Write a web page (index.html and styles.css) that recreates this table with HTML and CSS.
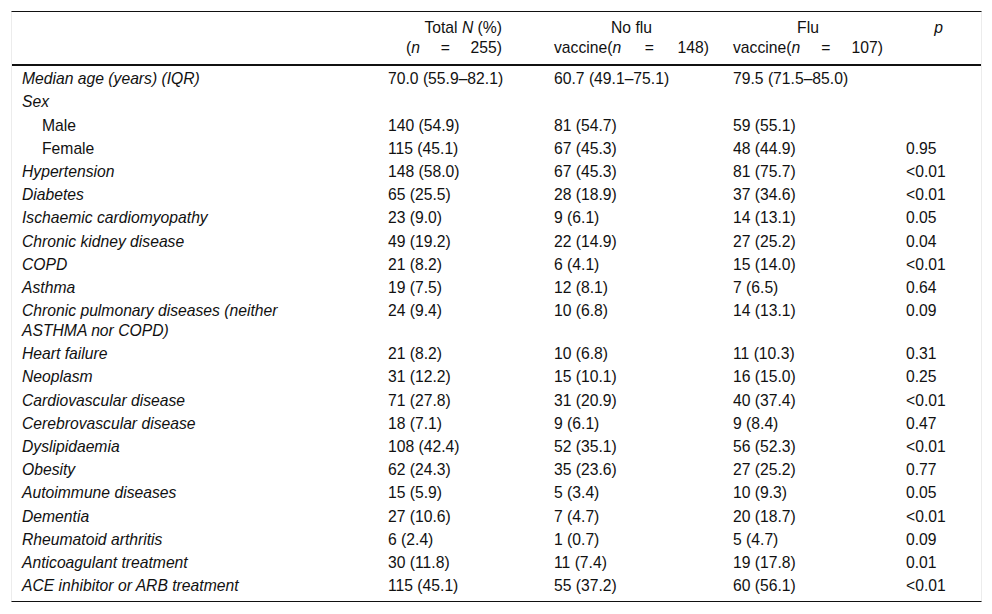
FILE: index.html
```html
<!DOCTYPE html>
<html lang="en">
<head>
<meta charset="utf-8">
<title>Table</title>
<link rel="stylesheet" href="styles.css">
</head>
<body>
<div class="wrap">
<table class="tbl">
<colgroup>
<col class="c1"><col class="c2"><col class="c3"><col class="c4"><col class="c5">
</colgroup>
<thead>
<tr>
<th></th>
<th><div class="hb hb-total"><div class="l1 right">Total <i>N</i> (%)</div><div class="l2"><span>(<i>n</i></span><span>=</span><span>255)</span></div></div></th>
<th><div class="hb hb-nf"><div class="l1">No flu</div><div class="l2"><span>vaccine(<i>n</i></span><span>=</span><span>148)</span></div></div></th>
<th><div class="hb hb-f"><div class="l1">Flu</div><div class="l2"><span>vaccine(<i>n</i></span><span>=</span><span>107)</span></div></div></th>
<th class="pcol"><i>p</i></th>
</tr>
</thead>
<tbody>
<tr><td class="lab">Median age (years) (IQR)</td><td>70.0 (55.9–82.1)</td><td>60.7 (49.1–75.1)</td><td>79.5 (71.5–85.0)</td><td></td></tr>
<tr><td class="lab">Sex</td><td></td><td></td><td></td><td></td></tr>
<tr><td class="sub">Male</td><td>140 (54.9)</td><td>81 (54.7)</td><td>59 (55.1)</td><td></td></tr>
<tr><td class="sub">Female</td><td>115 (45.1)</td><td>67 (45.3)</td><td>48 (44.9)</td><td>0.95</td></tr>
<tr><td class="lab">Hypertension</td><td>148 (58.0)</td><td>67 (45.3)</td><td>81 (75.7)</td><td>&lt;0.01</td></tr>
<tr><td class="lab">Diabetes</td><td>65 (25.5)</td><td>28 (18.9)</td><td>37 (34.6)</td><td>&lt;0.01</td></tr>
<tr><td class="lab">Ischaemic cardiomyopathy</td><td>23 (9.0)</td><td>9 (6.1)</td><td>14 (13.1)</td><td>0.05</td></tr>
<tr><td class="lab">Chronic kidney disease</td><td>49 (19.2)</td><td>22 (14.9)</td><td>27 (25.2)</td><td>0.04</td></tr>
<tr><td class="lab">COPD</td><td>21 (8.2)</td><td>6 (4.1)</td><td>15 (14.0)</td><td>&lt;0.01</td></tr>
<tr><td class="lab">Asthma</td><td>19 (7.5)</td><td>12 (8.1)</td><td>7 (6.5)</td><td>0.64</td></tr>
<tr><td class="lab">Chronic pulmonary diseases (neither<br>ASTHMA nor COPD)</td><td>24 (9.4)</td><td>10 (6.8)</td><td>14 (13.1)</td><td>0.09</td></tr>
<tr><td class="lab">Heart failure</td><td>21 (8.2)</td><td>10 (6.8)</td><td>11 (10.3)</td><td>0.31</td></tr>
<tr><td class="lab">Neoplasm</td><td>31 (12.2)</td><td>15 (10.1)</td><td>16 (15.0)</td><td>0.25</td></tr>
<tr><td class="lab">Cardiovascular disease</td><td>71 (27.8)</td><td>31 (20.9)</td><td>40 (37.4)</td><td>&lt;0.01</td></tr>
<tr><td class="lab">Cerebrovascular disease</td><td>18 (7.1)</td><td>9 (6.1)</td><td>9 (8.4)</td><td>0.47</td></tr>
<tr><td class="lab">Dyslipidaemia</td><td>108 (42.4)</td><td>52 (35.1)</td><td>56 (52.3)</td><td>&lt;0.01</td></tr>
<tr><td class="lab">Obesity</td><td>62 (24.3)</td><td>35 (23.6)</td><td>27 (25.2)</td><td>0.77</td></tr>
<tr><td class="lab">Autoimmune diseases</td><td>15 (5.9)</td><td>5 (3.4)</td><td>10 (9.3)</td><td>0.05</td></tr>
<tr><td class="lab">Dementia</td><td>27 (10.6)</td><td>7 (4.7)</td><td>20 (18.7)</td><td>&lt;0.01</td></tr>
<tr><td class="lab">Rheumatoid arthritis</td><td>6 (2.4)</td><td>1 (0.7)</td><td>5 (4.7)</td><td>0.09</td></tr>
<tr><td class="lab">Anticoagulant treatment</td><td>30 (11.8)</td><td>11 (7.4)</td><td>19 (17.8)</td><td>0.01</td></tr>
<tr><td class="lab">ACE inhibitor or ARB treatment</td><td>115 (45.1)</td><td>55 (37.2)</td><td>60 (56.1)</td><td>&lt;0.01</td></tr>
</tbody>
</table>
</div>
</body>
</html>
```
FILE: styles.css
```css
html, body {
  margin: 0;
  padding: 0;
  background: #fff;
}
body {
  font-family: "Liberation Sans", Arial, sans-serif;
  font-size: 15.7px;
  color: #111;
}
.wrap {
  box-sizing: border-box;
  margin: 11px 0 0 11px;
  width: 971px;
  border-top: 1px solid #111;
  border-bottom: 1px solid #111;
  border-left: 1px solid #ececec;
  border-right: 1px solid #ececec;
  padding-bottom: 5px;
}
.tbl {
  width: 969px;
  border-collapse: collapse;
  table-layout: fixed;
}
.c1 { width: 366px; }
.c2 { width: 166px; }
.c3 { width: 179px; }
.c4 { width: 173px; }
.c5 { width: 85px; }
.tbl th {
  font-weight: normal;
  text-align: left;
  vertical-align: top;
  padding: 6px 0 6px 10px;
  line-height: 20px;
  border-bottom: 2px solid #111;
}
.tbl th.pcol {
  text-align: center;
  padding-left: 0;
}
.hb .l1 { text-align: center; }
.hb .l1.right { text-align: right; }
.hb .l2 {
  display: flex;
  justify-content: space-between;
}
.hb-total { margin-left: 18px; width: 96px; }
.hb-nf { width: 155px; }
.hb-f { width: 150px; }
.tbl td {
  padding: 3.2px 0 0 10px;
  line-height: 20px;
  vertical-align: top;
}
.tbl td.lab { font-style: italic; }
.tbl td.sub { padding-left: 30px; }
```
